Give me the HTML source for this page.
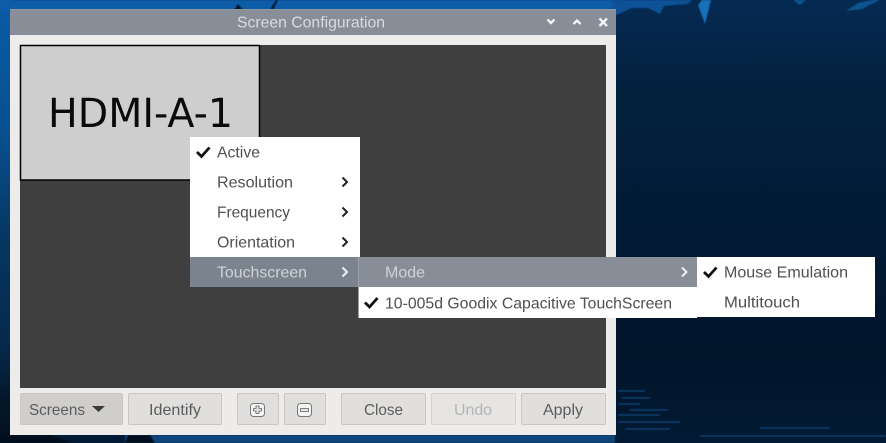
<!DOCTYPE html>
<html><head><meta charset="utf-8"><title>Screen Configuration</title>
<style>
html,body{margin:0;padding:0;width:886px;height:443px;overflow:hidden;background:#021a36}
svg{display:block;position:absolute;left:0;top:0}
text{font-family:"Liberation Sans",sans-serif;font-size:16px;fill:#505050}
</style></head><body>
<svg width="886" height="443" viewBox="0 0 886 443" xmlns="http://www.w3.org/2000/svg">
<defs>
<linearGradient id="bg" x1="0" y1="0" x2="0" y2="1">
<stop offset="0" stop-color="#052a52"/><stop offset=".2" stop-color="#03213f"/><stop offset=".5" stop-color="#021b36"/><stop offset=".8" stop-color="#01152b"/><stop offset="1" stop-color="#021a34"/>
</linearGradient>
<linearGradient id="lft" x1="0" y1="0" x2="0" y2="1">
<stop offset="0" stop-color="#0a5ba6"/><stop offset=".3" stop-color="#08508f"/><stop offset=".55" stop-color="#053660"/><stop offset=".78" stop-color="#06294c"/><stop offset=".9" stop-color="#04182c"/><stop offset="1" stop-color="#021020"/>
</linearGradient>
<filter id="b2"><feGaussianBlur stdDeviation="2"/></filter>
<filter id="b1"><feGaussianBlur stdDeviation=".8"/></filter>
<filter id="sh"><feGaussianBlur stdDeviation=".5"/></filter>
</defs>
<rect width="886" height="443" fill="url(#bg)"/>
<rect x="0" y="0" width="12" height="443" fill="url(#lft)"/>
<rect x="0" y="0" width="620" height="10" fill="#0a5ca8" filter="url(#sh)"/>
<path d="M234 10 L238 4 L243 10Z M270 10 L276 0 L278 0 L273 10Z" fill="#021325" filter="url(#sh)"/>
<path d="M612 0H692L688 4L664 6L660 14L648 8L632 8L616 15H612Z" fill="#0a5196" filter="url(#sh)"/>
<path d="M698 5 L702 0 L711 0 L705 24 Z" fill="#1670ba" filter="url(#sh)"/>
<path d="M793 0 L806 0 L800 5Z M846 11 L858 3 L872 0 L880 0 L862 9Z" fill="#0d5590" filter="url(#sh)"/>
<g stroke="#1b5a94" stroke-width="1.300" opacity=".75" filter="url(#sh)">
<path d="M618 391H645M622 398H650M618 404H640M630 410H668M618 415H660M618 422H680M700 436H886M760 428H830M625 429H670"/>
</g>
<g stroke="#0a4f92" stroke-width="4" opacity=".9" filter="url(#b1)">
<path d="M620 440H690M720 440H886"/>
</g>
<rect x="125" y="435" width="490" height="8" fill="#07447c" filter="url(#sh)"/>
<path d="M0 435H50L72 443H0Z M128 435H150L155 443H125Z" fill="#02101f" filter="url(#sh)"/>

<!-- Window -->
<rect x="10" y="9" width="606" height="426" fill="#edecea"/>
<rect x="10" y="9" width="606" height="26" fill="#878e97"/>
<rect x="10" y="9" width="606" height="1" fill="#9098a2"/>
<text x="311" y="27.500" text-anchor="middle" textLength="148" lengthAdjust="spacingAndGlyphs" style="fill:#d9dcdf">Screen Configuration</text>
<g fill="none" stroke="#f4f5f6" stroke-width="2.300">
<path d="M547.500 19.500L551 23L554.500 19.500"/>
<path d="M573.500 24L577 20.500L580.500 24"/>
<path d="M599.500 18.500L607 26M607 18.500L599.500 26"/>
</g>

<!-- Canvas -->
<rect x="20" y="45" width="586" height="343" fill="#3f3f3f"/>
<rect x="20.500" y="45.500" width="239" height="134.500" fill="#cecece" stroke="#000" stroke-width="1.500"/>
<text x="48" y="127" textLength="185" lengthAdjust="spacingAndGlyphs" style="font-family:'DejaVu Sans',sans-serif;font-size:40px;fill:#0a0a0a">HDMI-A-1</text>

<!-- Buttons -->
<g stroke="#c7c6c4" stroke-width="1">
<rect x="20.500" y="393.500" width="102" height="31" rx="1.500" fill="#cfcecc"/>
<rect x="128.500" y="393.500" width="93" height="31" rx="1.500" fill="#e0dfdd"/>
<rect x="237.500" y="393.500" width="41" height="31" rx="1.500" fill="#e0dfdd"/>
<rect x="284.500" y="393.500" width="41" height="31" rx="1.500" fill="#e0dfdd"/>
<rect x="341.500" y="393.500" width="84" height="31" rx="1.500" fill="#e0dfdd"/>
<rect x="431.500" y="393.500" width="84" height="31" rx="1.500" fill="#e6e5e3" stroke="#d5d4d2"/>
<rect x="521.500" y="393.500" width="84" height="31" rx="1.500" fill="#e0dfdd"/>
</g>
<text x="29" y="415" textLength="56" lengthAdjust="spacingAndGlyphs" style="fill:#5c5c5c">Screens</text>
<path d="M92 406H105L98.500 412Z" fill="#3a3a3a"/>
<text x="149" y="415" textLength="52" lengthAdjust="spacingAndGlyphs" style="fill:#5c5c5c">Identify</text>
<text x="364" y="415" textLength="39" lengthAdjust="spacingAndGlyphs" style="fill:#5c5c5c">Close</text>
<text x="454" y="415" textLength="38" lengthAdjust="spacingAndGlyphs" style="fill:#b4b4b4">Undo</text>
<text x="543" y="415" textLength="40" lengthAdjust="spacingAndGlyphs" style="fill:#5c5c5c">Apply</text>
<rect x="250.500" y="403.500" width="14" height="13" rx="3" fill="#f4f4f3" stroke="#777"/>
<path d="M256 406H259V408.500H261.500V411H259V413.500H256V411H253.500V408.500H256Z" fill="#e4e4e4" stroke="#666" stroke-width=".8"/>
<rect x="297.500" y="403.500" width="14" height="13" rx="3" fill="#f4f4f3" stroke="#777"/>
<rect x="300.500" y="408.500" width="8" height="3" fill="#e4e4e4" stroke="#666" stroke-width=".8"/>

<!-- Menu 1 -->
<rect x="190" y="137" width="170" height="150" fill="#fff"/>
<rect x="190" y="257" width="168" height="30" fill="#7a838e"/>
<path d="M197 152L201.500 156.500L209.500 147.500" fill="none" stroke="#111" stroke-width="2.800"/>
<text x="217" y="157.500" textLength="43" lengthAdjust="spacingAndGlyphs">Active</text>
<text x="217" y="187.500" textLength="76" lengthAdjust="spacingAndGlyphs">Resolution</text>
<text x="217" y="217.500" textLength="73" lengthAdjust="spacingAndGlyphs">Frequency</text>
<text x="217" y="247.500" textLength="78" lengthAdjust="spacingAndGlyphs">Orientation</text>
<text x="217" y="277.500" textLength="90" lengthAdjust="spacingAndGlyphs" style="fill:#cfd3d7">Touchscreen</text>
<g fill="none" stroke="#222" stroke-width="2">
<path d="M342.500 177.500L347 182L342.500 186.500"/>
<path d="M342.500 207.500L347 212L342.500 216.500"/>
<path d="M342.500 237.500L347 242L342.500 246.500"/>
</g>
<path d="M342.500 267.500L347 272L342.500 276.500" fill="none" stroke="#eef0f2" stroke-width="2"/>

<!-- Menu 2 -->
<rect x="358" y="257" width="339" height="61" fill="#fff"/>
<rect x="358" y="257" width="339" height="30" fill="#878e97"/>
<rect x="358" y="257" width="1" height="61" fill="#9aa0a8"/>
<text x="385" y="277.500" textLength="40" lengthAdjust="spacingAndGlyphs" style="fill:#cfd3d7">Mode</text>
<path d="M682 267.500L686.500 272L682 276.500" fill="none" stroke="#eef0f2" stroke-width="2"/>
<path d="M365 302.500L369.500 307L377.500 298" fill="none" stroke="#111" stroke-width="2.800"/>
<text x="385" y="308.500" textLength="287" lengthAdjust="spacingAndGlyphs">10-005d Goodix Capacitive TouchScreen</text>

<!-- Menu 3 -->
<rect x="697" y="257" width="178" height="60" fill="#fff"/>
<path d="M704 272L708.500 276.500L716.500 267.500" fill="none" stroke="#111" stroke-width="2.800"/>
<text x="724" y="277.500" textLength="124" lengthAdjust="spacingAndGlyphs">Mouse Emulation</text>
<text x="724" y="307.500" textLength="76" lengthAdjust="spacingAndGlyphs">Multitouch</text>
</svg>
</body></html>
